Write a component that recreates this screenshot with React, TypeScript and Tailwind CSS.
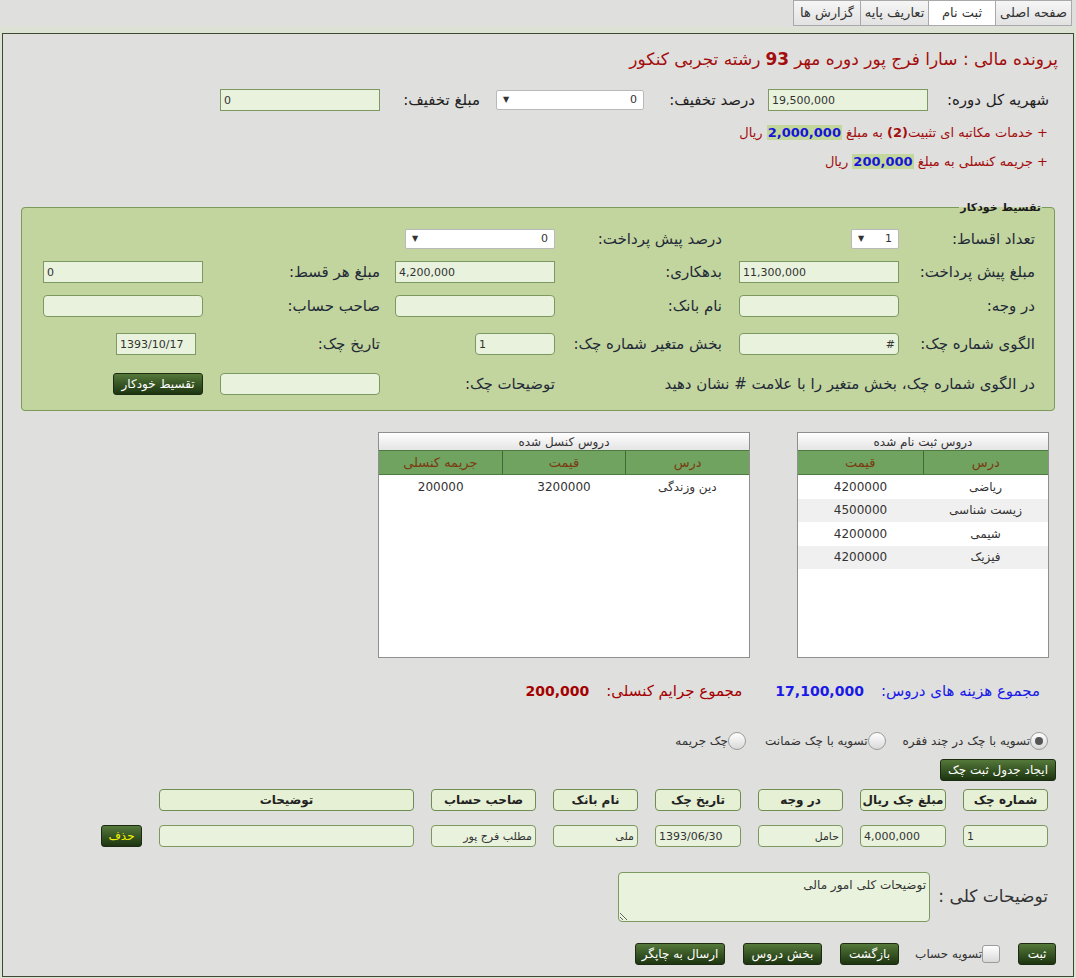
import React from 'react';

const inputBase =
  'h-[22px] bg-[#e8f2dc] border border-[#7d9860] text-[11px] text-[#333] px-[3px] outline-none';

function Field({
  value = '',
  w = 'w-[160px]',
  round = false,
  ltr = true,
}: {
  value?: string;
  w?: string;
  round?: boolean;
  ltr?: boolean;
}) {
  return (
    <input
      readOnly
      value={value}
      dir={ltr ? 'ltr' : 'rtl'}
      className={`${inputBase} ${w} ${round ? 'rounded-[4px]' : ''} ${ltr ? 'text-left' : 'text-right'}`}
    />
  );
}

function Select({ value, w }: { value: string; w: string }) {
  return (
    <div
      className={`${w} h-[20px] bg-white border border-[#b9b9b9] rounded-[2px] flex items-center justify-between px-[6px] text-[11px] text-[#333]`}
    >
      <span>{value}</span>
      <span className="text-[8px] text-[#333]">▼</span>
    </div>
  );
}

function DarkButton({ children, w, yellow = false }: { children: React.ReactNode; w: string; yellow?: boolean }) {
  return (
    <button
      className={`${w} h-[22px] rounded-[3px] border border-[#1c2b12] bg-gradient-to-b from-[#55793a] to-[#1d3511] text-[12px] whitespace-nowrap ${
        yellow ? 'text-[#f2f200]' : 'text-white'
      } flex items-center justify-center`}
    >
      {children}
    </button>
  );
}

function Radio({ checked = false }: { checked?: boolean }) {
  return (
    <span className="w-[18px] h-[18px] rounded-full border border-[#9b9b9b] bg-gradient-to-b from-white to-[#d9d9d9] flex items-center justify-center shrink-0">
      {checked && <span className="w-[8px] h-[8px] rounded-full bg-[#555]" />}
    </span>
  );
}

function Label({ w, children }: { w: string; children: React.ReactNode }) {
  return <div className={`${w} shrink-0 text-[15px] text-[#1f2a38] whitespace-nowrap`}>{children}</div>;
}

function CourseTable({
  title,
  width,
  cols,
  rows,
}: {
  title: string;
  width: string;
  cols: string[];
  rows: string[][];
}) {
  return (
    <div className={`${width} h-[226px] border border-[#8f8f8f] bg-white flex flex-col`}>
      <div className="h-[17px] bg-gradient-to-b from-white to-[#e4e4e4] text-[12px] text-[#333] flex items-center justify-center">
        {title}
      </div>
      <div className="h-[25px] bg-[#6fa35f] border-y border-[#4c7a3f] flex">
        {cols.map((c, i) => (
          <div
            key={c}
            className={`flex-1 flex items-center justify-center text-[13px] text-[#7a3b14] ${
              i < cols.length - 1 ? 'border-l border-[#3f6a33]' : ''
            }`}
          >
            {c}
          </div>
        ))}
      </div>
      {rows.map((r, i) => (
        <div key={i} className={`h-[23.5px] flex ${i % 2 ? 'bg-[#f0f0f0]' : 'bg-white'}`}>
          {r.map((cell, j) => (
            <div key={j} className="flex-1 flex items-center justify-center text-[12px] text-[#333]">
              {cell}
            </div>
          ))}
        </div>
      ))}
    </div>
  );
}

export default function App() {
  const tabs = [
    { name: 'صفحه اصلی', w: 'w-[77px]' },
    { name: 'ثبت نام', w: 'w-[68px]', active: true },
    { name: 'تعاریف پایه', w: 'w-[69px]' },
    { name: 'گزارش ها', w: 'w-[68px]' },
  ];

  const headCols = [
    { t: 'شماره چک', w: 'w-[85px]' },
    { t: 'مبلغ چک ریال', w: 'w-[86px]' },
    { t: 'در وجه', w: 'w-[85px]' },
    { t: 'تاریخ چک', w: 'w-[86px]' },
    { t: 'نام بانک', w: 'w-[85px]' },
    { t: 'صاحب حساب', w: 'w-[105px]' },
    { t: 'توضیحات', w: 'w-[255px]' },
  ];

  return (
    <div
      dir="rtl"
      className="w-[1076px] h-[978px] bg-[#dce2d4] font-['DejaVu_Sans',sans-serif] text-[#333] overflow-hidden"
    >
      {/* top tabs */}
      <div className="h-[27px] bg-[#dfdfdd] flex items-start pr-[4px]">
        {tabs.map((t) => (
          <div
            key={t.name}
            className={`${t.w} h-[26px] border border-[#a9a9a9] -ml-px flex items-center justify-center text-[13px] text-[#333] ${
              t.active ? 'bg-white' : 'bg-gradient-to-b from-[#f6f6f6] to-[#e2e2e2]'
            }`}
          >
            {t.name}
          </div>
        ))}
      </div>
      <div className="h-[6px]" />

      {/* main panel */}
      <div className="mx-[2px] h-[944px] border border-[#3e4b33] bg-[#dfdfdd] flex flex-col">
        {/* title */}
        <div className="mt-[14px] h-[24px] pr-[15px] flex items-center text-[17px] text-[#a30d0d] whitespace-nowrap">
          پرونده مالی : سارا فرج پور دوره مهر <b className="mx-[5px]">93</b> رشته تجربی کنکور
        </div>

        {/* tuition row */}
        <div className="mt-[17px] h-[22px] pr-[24px] flex items-center">
          <div className="w-[121px] text-[15px] text-[#222]">شهریه کل دوره:</div>
          <Field value="19,500,000" />
          <div className="w-[13px]" />
          <div className="w-[111px] text-[15px] text-[#222]">درصد تخفیف:</div>
          <Select value="0" w="w-[148px]" />
          <div className="w-[16px]" />
          <div className="w-[100px] text-[15px] text-[#222]">مبلغ تخفیف:</div>
          <Field value="0" />
        </div>

        <div className="mt-[12px] h-[20px] pr-[25px] flex items-center text-[13px] text-[#a30d0d] whitespace-nowrap">
          <span>
            + خدمات مکاتبه ای تثبیت<b>(2)</b> به مبلغ{' '}
            <b className="bg-[#c3d69b] text-[#1515d8] px-[1px]">2,000,000</b> ریال
          </span>
        </div>
        <div className="mt-[9px] h-[20px] pr-[25px] flex items-center text-[13px] text-[#a30d0d] whitespace-nowrap">
          <span>
            + جریمه کنسلی به مبلغ <b className="bg-[#c3d69b] text-[#1515d8] px-[1px]">200,000</b> ریال
          </span>
        </div>

        {/* auto installment */}
        <fieldset className="mt-[29px] mx-[18px] h-[210px] border border-[#7c9a5c] rounded-[4px] bg-[#c3d59e]">
          <legend className="mr-[12px] px-[1px] text-[11px] font-bold text-[#1a1a1a] leading-[13px]">
            تقسیط خودکار
          </legend>

          <div className="mt-[14px] h-[22px] pr-[19px] flex items-center">
            <Label w="w-[136px]">تعداد اقساط:</Label>
            <div className="w-[177px] flex">
              <Select value="1" w="w-[48px]" />
            </div>
            <Label w="w-[167px]">درصد پیش پرداخت:</Label>
            <div className="w-[175px] flex">
              <Select value="0" w="w-[150px]" />
            </div>
          </div>

          <div className="mt-[11px] h-[22px] pr-[19px] flex items-center">
            <Label w="w-[136px]">مبلغ پیش پرداخت:</Label>
            <div className="w-[177px] flex">
              <Field value="11,300,000" />
            </div>
            <Label w="w-[167px]">بدهکاری:</Label>
            <div className="w-[175px] flex">
              <Field value="4,200,000" />
            </div>
            <Label w="w-[177px]">مبلغ هر قسط:</Label>
            <Field value="0" />
          </div>

          <div className="mt-[12px] h-[22px] pr-[19px] flex items-center">
            <Label w="w-[136px]">در وجه:</Label>
            <div className="w-[177px] flex">
              <Field round />
            </div>
            <Label w="w-[167px]">نام بانک:</Label>
            <div className="w-[175px] flex">
              <Field round />
            </div>
            <Label w="w-[177px]">صاحب حساب:</Label>
            <Field round />
          </div>

          <div className="mt-[16px] h-[22px] pr-[19px] flex items-center">
            <Label w="w-[136px]">الگوی شماره چک:</Label>
            <div className="w-[177px] flex">
              <Field value="#" round ltr={false} />
            </div>
            <Label w="w-[167px]">بخش متغیر شماره چک:</Label>
            <div className="w-[175px] flex">
              <Field value="1" round w="w-[80px]" />
            </div>
            <Label w="w-[177px]">تاریخ چک:</Label>
            <div className="w-[160px] flex pr-[7px]">
              <Field value="1393/10/17" w="w-[80px]" />
            </div>
          </div>

          <div className="mt-[18px] h-[22px] pr-[19px] flex items-center">
            <Label w="w-[480px]">در الگوی شماره چک، بخش متغیر را با علامت # نشان دهید</Label>
            <Label w="w-[175px]">توضیحات چک:</Label>
            <div className="w-[177px] flex">
              <Field round />
            </div>
            <DarkButton w="w-[90px]">تقسیط خودکار</DarkButton>
          </div>
        </fieldset>

        {/* tables */}
        <div className="mt-[21px] pr-[24px] flex items-start gap-[47px]">
          <CourseTable
            title="دروس ثبت نام شده"
            width="w-[252px]"
            cols={['درس', 'قیمت']}
            rows={[
              ['ریاضی', '4200000'],
              ['زیست شناسی', '4500000'],
              ['شیمی', '4200000'],
              ['فیزیک', '4200000'],
            ]}
          />
          <CourseTable
            title="دروس کنسل شده"
            width="w-[372px]"
            cols={['درس', 'قیمت', 'جریمه کنسلی']}
            rows={[['دین وزندگی', '3200000', '200000']]}
          />
        </div>

        {/* totals */}
        <div className="mt-[23px] h-[20px] pr-[33px] flex items-center text-[15px] whitespace-nowrap">
          <span className="text-[#1a1ae6]">مجموع هزینه های دروس:</span>
          <b className="mr-[17px] text-[14px] text-[#1a1ae6]">17,100,000</b>
          <span className="mr-[33px] text-[#a40000]">مجموع جرایم کنسلی:</span>
          <b className="mr-[17px] text-[14px] text-[#a40000]">200,000</b>
        </div>

        {/* radios */}
        <div className="mt-[30px] h-[20px] pr-[25px] flex items-center text-[12px] text-[#333] whitespace-nowrap">
          <Radio checked />
          <span>تسویه با چک در چند فقره</span>
          <span className="w-[17px]" />
          <Radio />
          <span>تسویه با چک ضمانت</span>
          <span className="w-[19px]" />
          <Radio />
          <span>چک جریمه</span>
        </div>

        <div className="mt-[8px] h-[22px] pr-[17px] flex">
          <DarkButton w="w-[116px]">ایجاد جدول ثبت چک</DarkButton>
        </div>

        {/* check table header */}
        <div className="mt-[8px] h-[22px] pr-[25px] flex gap-[17px]">
          {headCols.map((c) => (
            <div
              key={c.t}
              className={`${c.w} h-[22px] rounded-[4px] border border-[#6f8d52] bg-[#e6f0d4] flex items-center justify-center text-[12px] font-bold text-[#222]`}
            >
              {c.t}
            </div>
          ))}
        </div>

        <div className="mt-[14px] h-[22px] pr-[25px] flex gap-[17px]">
          <Field value="1" round w="w-[85px]" />
          <Field value="4,000,000" round w="w-[86px]" />
          <Field value="حامل" round ltr={false} w="w-[85px]" />
          <Field value="1393/06/30" round w="w-[86px]" />
          <Field value="ملی" round ltr={false} w="w-[85px]" />
          <Field value="مطلب فرج پور" round ltr={false} w="w-[105px]" />
          <Field round w="w-[255px]" />
          <DarkButton w="w-[41px]" yellow>
            حذف
          </DarkButton>
        </div>

        {/* general notes */}
        <div className="mt-[25px] h-[50px] pr-[25px] flex items-center">
          <div className="w-[118px] text-[17px] text-[#333]">توضیحات کلی :</div>
          <textarea
            readOnly
            value="توضیحات کلی امور مالی"
            className="w-[312px] h-[50px] rounded-[4px] border border-[#7d9860] bg-[#e8f2dc] text-[12px] text-[#333] px-[3px] py-[3px] outline-none"
          />
        </div>

        {/* bottom actions */}
        <div className="mt-[21px] h-[22px] pr-[17px] flex items-center text-[12px] whitespace-nowrap">
          <DarkButton w="w-[38px]">ثبت</DarkButton>
          <span className="w-[18px]" />
          <span className="w-[18px] h-[18px] rounded-[3px] border border-[#9b9b9b] bg-gradient-to-b from-white to-[#d9d9d9]" />
          <span className="w-[64px] text-[#333]">تسویه حساب</span>
          <span className="w-[19px]" />
          <DarkButton w="w-[59px]">بازگشت</DarkButton>
          <span className="w-[18px]" />
          <DarkButton w="w-[79px]">بخش دروس</DarkButton>
          <span className="w-[18px]" />
          <DarkButton w="w-[90px]">ارسال به چاپگر</DarkButton>
        </div>
      </div>
    </div>
  );
}
